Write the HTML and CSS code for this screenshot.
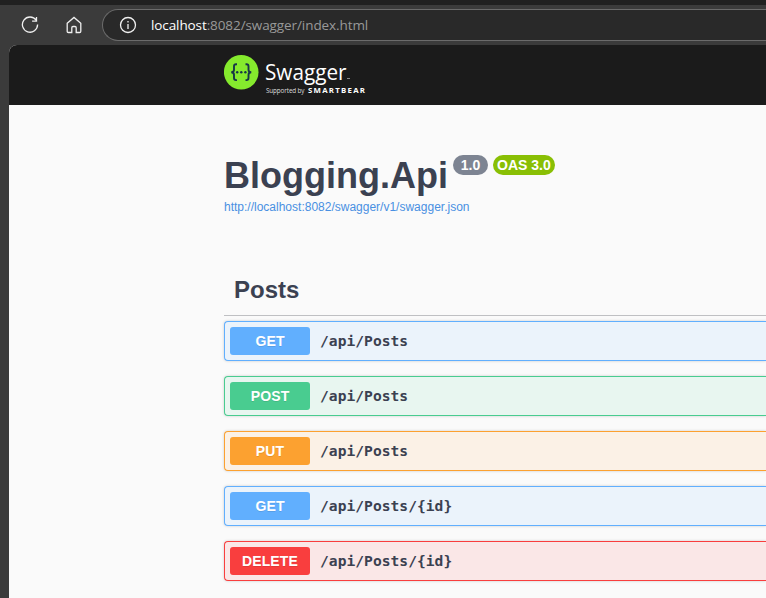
FILE: index.html
```html
<!DOCTYPE html>
<html lang="en">
<head>
<meta charset="utf-8">
<title>Swagger UI</title>
<link rel="stylesheet" href="styles.css">
</head>
<body>
<div class="toolbar">
  <svg class="reload" width="18" height="18" viewBox="0 0 18 18"><path d="M15.2 4.2A7.6 7.6 0 1 0 16.6 8.6M15.5 1v4.2h-4.4"/></svg>
  <svg class="home" width="16" height="18" viewBox="0 0 16 18"><path d="M1.2 7.2 8 1.4l6.800 5.800v8.100q0 1.200-1.200 1.200H10.200v-4.800q0-1.200-1.200-1.200H7q-1.200 0-1.200 1.200v4.800H2.400q-1.200 0-1.200-1.200z"/></svg>
  <div class="address">
    <svg width="18" height="18" viewBox="0 0 18 18"><circle cx="9" cy="9" r="7.500"/><path d="M9 8v5M9 5v1.500"/></svg>
    <span class="url"><b>localhost</b>:8082/swagger/index.html</span>
  </div>
</div>
<main class="page">
  <header class="topbar">
    <svg class="logo" width="144" height="44" viewBox="0 0 144 44">
      <circle cx="17.200" cy="20.200" r="17.300" fill="#85ea2d"/>
      <g fill="none" stroke="#173647" stroke-width="1.900">
        <path d="M13 12.300h-1q-2 0-2 2v3.400q0 2.500-2.800 2.500 2.800 0 2.800 2.500v3.400q0 2 2 2h1M21.500 12.300h1q2 0 2 2v3.400q0 2.500 2.800 2.500-2.800 0-2.800 2.500v3.400q0 2-2 2h-1"/>
      </g>
      <g fill="#173647"><circle cx="13.200" cy="20.200" r="1.200"/><circle cx="17.300" cy="20.200" r="1.200"/><circle cx="21.400" cy="20.200" r="1.200"/></g>
      <g fill="#fff">
        <text class="word" x="41" y="27.500" textLength="81.500" lengthAdjust="spacingAndGlyphs">Swagger</text>
        <rect x="123" y="26" width="3" height="1" fill="#888"/>
        <text class="support" x="42" y="41" textLength="38.500">Supported by</text>
        <text class="bear" x="84" y="41" textLength="57">SMARTBEAR</text>
      </g>
    </svg>
  </header>
  <section class="content">
    <div class="info">
      <h1>Blogging.Api</h1>
      <span class="version">1.0</span><span class="version oas">OAS 3.0</span>
    </div>
    <a class="link">http://localhost:8082/swagger/v1/swagger.json</a>
    <h2>Posts</h2>
    <div class="operations">
      <div class="op get"><span class="method">GET</span><span class="path">/api/Posts</span></div>
      <div class="op post"><span class="method">POST</span><span class="path">/api/Posts</span></div>
      <div class="op put"><span class="method">PUT</span><span class="path">/api/Posts</span></div>
      <div class="op get"><span class="method">GET</span><span class="path">/api/Posts/{id}</span></div>
      <div class="op delete"><span class="method">DELETE</span><span class="path">/api/Posts/{id}</span></div>
    </div>
  </section>
</main>
</body>
</html>
```
FILE: styles.css
```css
* { box-sizing: border-box; }
body {
  margin: 0;
  height: 598px;
  overflow: hidden;
  background: #3b3b3b;
  color: #3b4151;
  font-family: "Liberation Sans", Arial, sans-serif;
}
.toolbar {
  display: flex;
  align-items: center;
  height: 45px;
  padding: 4px 0 4px 21px;
  border-top: 5px solid #202020;
}
.toolbar svg { fill: none; stroke: #f0f0f0; stroke-width: 1.3; flex: none; }
.toolbar .home { margin: 0 20px 0 27px; }
.address {
  display: flex;
  align-items: center;
  flex: 1;
  height: 32px;
  padding-left: 16px;
  border: 1px solid #6b6b6b;
  border-right: 0;
  border-radius: 16px 0 0 16px;
  background: #292929;
}
.url {
  margin-left: 14px;
  font: 13.5px/20px "Open Sans", sans-serif;
  letter-spacing: -0.09px;
  color: #999;
  white-space: nowrap;
}
.url b { font-weight: 500; letter-spacing: -0.1px; color: #fff; }
.page {
  height: 553px;
  margin-left: 9px;
  border-radius: 8px 0 0;
  background: #fafafa;
  overflow: hidden;
}
.topbar { height: 60px; padding: 7px 0 0 215px; background: #1b1b1b; }
.logo { display: block; }
.word { font: 22.5px "Open Sans", sans-serif; }
.support { font: 6.3px "Open Sans", sans-serif; fill: #ddd; }
.bear { font: 700 7.8px "Open Sans", sans-serif; }
.content { padding: 50px 0 0 215px; }
.info { display: flex; align-items: flex-start; height: 44px; }
h1 { margin: 0 5px 0 0; font-size: 36px; line-height: 41px; }
.version {
  height: 20px;
  padding: 0 7.800px;
  border-radius: 10px;
  background: #7d8492;
  color: #fff;
  font-size: 14px;
  font-weight: 700;
  line-height: 20px;
  white-space: nowrap;
}
.oas { margin-left: 5px; padding: 0 4px; background: #89bf04; }
.link { display: block; font-size: 12px; line-height: 16px; color: #4990e2; }
h2 {
  height: 101px;
  margin: 0;
  padding: 61px 0 0 10px;
  border-bottom: 1px solid #bfc0c3;
  font-size: 24px;
  line-height: 28px;
}
.operations { display: grid; gap: 15px; padding-top: 5px; }
.op {
  display: flex;
  align-items: center;
  height: 40px;
  padding-left: 5px;
  border: 1px solid var(--tone);
  border-right: 0;
  border-radius: 4px 0 0 4px;
  background: var(--tint);
  box-shadow: 0 0 3px rgba(0, 0, 0, .19);
}
.method {
  width: 80px;
  height: 28px;
  border-radius: 3px;
  background: var(--tone);
  color: #fff;
  font-size: 14px;
  font-weight: 700;
  letter-spacing: .15px;
  line-height: 28px;
  text-align: center;
  text-shadow: 0 1px 0 rgba(0, 0, 0, .1);
}
.path { margin-left: 10px; font: 700 14.600px/20px "DejaVu Sans Mono", monospace; letter-spacing: .03px; }
.get { --tone: #61affe; --tint: #ebf3fb; }
.post { --tone: #49cc90; --tint: #e8f6f0; }
.put { --tone: #fca130; --tint: #fbf1e6; }
.delete { --tone: #f93e3e; --tint: #fae7e7; }
```
